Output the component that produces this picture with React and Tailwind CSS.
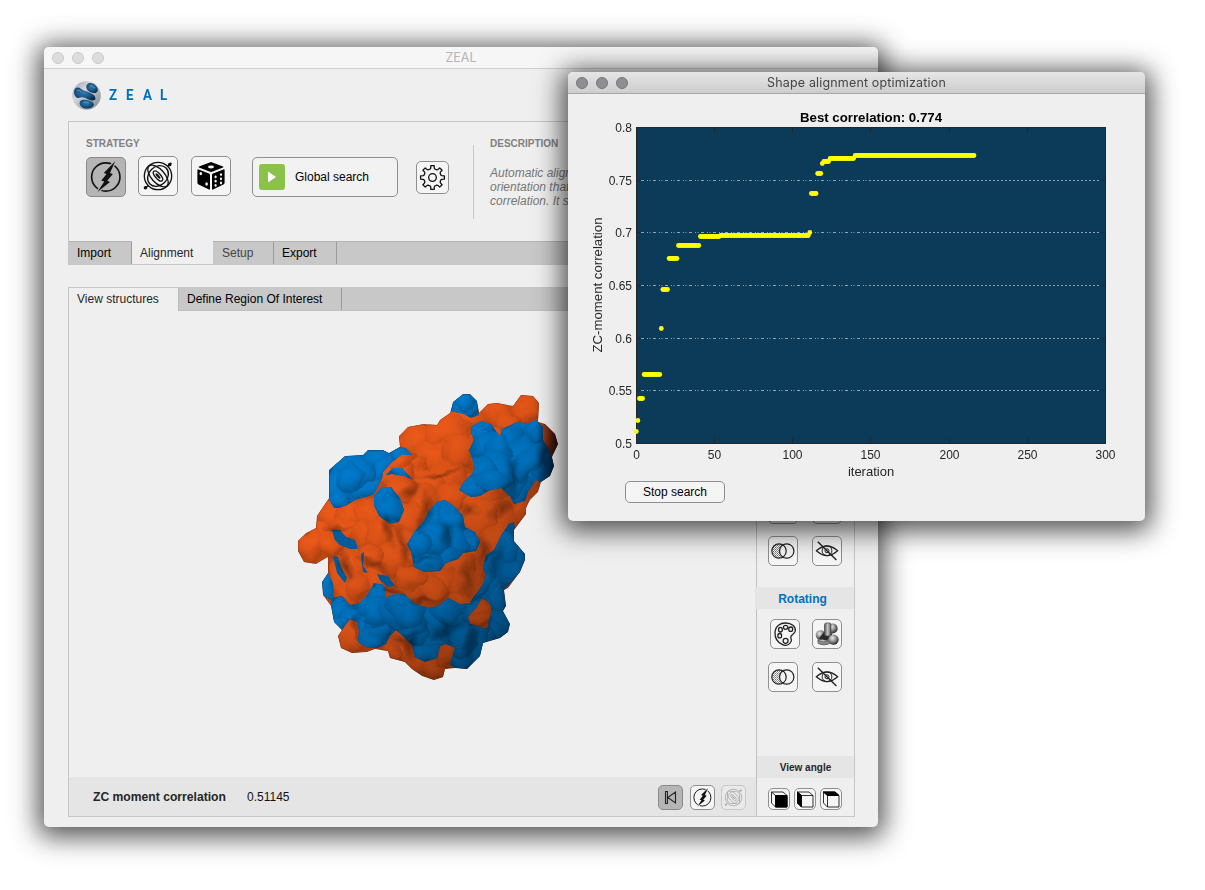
import React from "react";

const FONT = "font-['Liberation_Sans',sans-serif]";

/* ---------- icons ---------- */

const BOLT = "M29.7 3.3 17.6 15.8 20.6 16.8 15 23.8 18.2 24.7 11 35.8 24.2 25.2 21.3 24 27.2 16.8 24.2 15.7Z";

function BoltIcon({ size, bg }) {
  return (
    <svg width={size} height={size} viewBox="0 0 40 40" fill="none">
      <circle cx="19.8" cy="20" r="14.9" stroke="#111" strokeWidth="1.7" />
      <path d={BOLT} fill={bg} stroke={bg} strokeWidth="2.6" />
      <path d={BOLT} fill="#111" />
    </svg>
  );
}

function GyroIcon({ size, color = "#111" }) {
  return (
    <svg width={size} height={size} viewBox="0 0 40 40" fill="none" stroke={color} strokeWidth="1.4">
      <circle cx="20" cy="20" r="14.4" />
      <ellipse cx="20" cy="20" rx="14" ry="7" transform="rotate(48 20 20)" />
      <ellipse cx="20" cy="20" rx="12" ry="9.8" transform="rotate(-45 20 20)" />
      <ellipse cx="20" cy="20" rx="6.6" ry="2.8" transform="rotate(48 20 20)" />
      <ellipse cx="20" cy="20" rx="2.8" ry=".6" transform="rotate(48 20 20)" />
      <path d="M5.8 33.2 10 30M30 10 34 6.2" strokeWidth="1.6" />
      <circle cx="6.8" cy="32.4" r="1.2" fill={color} />
      <circle cx="32.4" cy="8" r="1.2" fill={color} />
    </svg>
  );
}

function DiceIcon() {
  return (
    <svg width="38" height="38" viewBox="0 0 38 38">
      <path d="M19 5 31 9.4Q32 10 31 10.6L20 14.8Q19 15.1 18 14.8L7 10.6Q6 10 7 9.4Z" fill="#000" />
      <path d="M5.4 13.2Q5.4 12 6.6 12.5L17 16.6Q18 17 18 18.2V31.8Q18 33 17 32.5L6.6 27.4Q5.4 27 5.4 25.8Z" fill="#000" />
      <path d="M32.6 13.2Q32.6 12 31.4 12.5L21 16.6Q20 17 20 18.2V31.8Q20 33 21 32.5L31.4 27.4Q32.6 27 32.6 25.8Z" fill="#000" />
      <g fill="#f5f5f5">
        <ellipse cx="19" cy="10" rx="3" ry="1.4" />
        <ellipse cx="8.8" cy="16.6" rx="1.3" ry="1.7" />
        <ellipse cx="14.6" cy="27" rx="1.3" ry="1.8" />
        <ellipse cx="23.6" cy="19.9" rx="1.1" ry="1.4" />
        <ellipse cx="23.6" cy="24.2" rx="1.1" ry="1.4" />
        <ellipse cx="23.6" cy="28.4" rx="1.1" ry="1.4" />
        <ellipse cx="29" cy="17.6" rx="1.1" ry="1.4" />
        <ellipse cx="29" cy="21.8" rx="1.1" ry="1.4" />
        <ellipse cx="29" cy="26" rx="1.1" ry="1.4" />
      </g>
    </svg>
  );
}

function gearPath() {
  const p = [];
  for (let i = 0; i < 8; i++) {
    const a = (i * 45 * Math.PI) / 180;
    [[-0.27, 8.8], [-0.19, 9.5], [-0.14, 12], [0.14, 12], [0.19, 9.5], [0.27, 8.8]].forEach(([d, r]) => {
      p.push(`${(15.5 + r * Math.cos(a + d)).toFixed(2)} ${(15.5 + r * Math.sin(a + d)).toFixed(2)}`);
    });
  }
  return "M" + p.join("L") + "Z";
}

function GearIcon() {
  return (
    <svg width="31" height="31" viewBox="0 0 31 31" fill="none" stroke="#111" strokeWidth="1.3" strokeLinejoin="round">
      <path d={gearPath()} />
      <circle cx="15.5" cy="15.5" r="3.8" />
    </svg>
  );
}

function VennIcon() {
  return (
    <svg width="28" height="28" viewBox="0 0 28 28" fill="none">
      <defs>
        <pattern id="dots" width="2" height="2" patternUnits="userSpaceOnUse">
          <rect width="1" height="1" fill="#777" />
          <rect x="1" y="1" width="1" height="1" fill="#999" />
        </pattern>
      </defs>
      <circle cx="10" cy="14" r="7.2" fill="url(#dots)" />
      <circle cx="17.7" cy="14" r="7.2" fill="#f3f3f3" />
      <circle cx="10" cy="14" r="7.2" stroke="#222" strokeWidth="1.2" />
      <circle cx="17.7" cy="14" r="7.2" stroke="#222" strokeWidth="1.2" />
    </svg>
  );
}

function EyeOffIcon() {
  return (
    <svg width="28" height="28" viewBox="0 0 28 28" fill="none" stroke="#222" strokeWidth="1.3">
      <path d="M3.4 13.8Q14 4.2 24.6 13.8Q14 23.4 3.4 13.8Z" />
      <circle cx="14" cy="13.8" r="4.9" strokeWidth="1" />
      <circle cx="14" cy="13.8" r="2" strokeWidth="1" />
      <path d="M4.8 4.8 23.4 23" strokeWidth="1.4" />
    </svg>
  );
}

function PaletteIcon() {
  return (
    <svg width="28" height="28" viewBox="0 0 28 28" fill="none" stroke="#222" strokeWidth="1.3">
      <path d="M20.2 21.3C18.5 25 15 26.2 11.5 24.6C6.5 22.4 3.8 17.5 4 12.5C4.3 6 9.5 2.8 14.8 3C20.5 3.2 24.8 6.4 24.3 10.8C24 14 20.3 14.2 19.8 16.8C19.4 18.8 21 19.4 20.2 21.3Z" />
      <circle cx="14.6" cy="20.8" r="2.5" />
      <ellipse cx="8.7" cy="15.7" rx="1.9" ry="2.2" />
      <ellipse cx="9.4" cy="9.7" rx="1.9" ry="2.3" />
      <ellipse cx="14.6" cy="7.3" rx="2.2" ry="2" />
      <ellipse cx="19.7" cy="9.2" rx="2" ry="2.2" />
    </svg>
  );
}

function MoleculeIcon() {
  return (
    <svg width="28" height="28" viewBox="0 0 28 28">
      <defs>
        <radialGradient id="ball" cx=".4" cy=".35" r=".65">
          <stop offset="0" stopColor="#ececec" />
          <stop offset=".55" stopColor="#8c8c8c" />
          <stop offset="1" stopColor="#2c2c2c" />
        </radialGradient>
        <linearGradient id="rod">
          <stop offset="0" stopColor="#555" />
          <stop offset=".5" stopColor="#c8c8c8" />
          <stop offset="1" stopColor="#555" />
        </linearGradient>
      </defs>
      <circle cx="19.6" cy="8.4" r="5" fill="url(#ball)" />
      <ellipse cx="11" cy="20.5" rx="6.5" ry="4.6" fill="url(#ball)" />
      <circle cx="7.5" cy="15" r="4.8" fill="url(#ball)" />
      <path d="M6 18.5 11 12H18L20 17 13 20.5Z" fill="#2a2a2a" />
      <rect x="11.5" y="3" width="6.4" height="13" rx="1.8" fill="url(#rod)" stroke="#444" strokeWidth=".7" />
      <path d="M5 20.5Q11 23.5 17 20.5V23.5Q11 26.5 5 23.5Z" fill="#8a8a8a" stroke="#444" strokeWidth=".5" />
      <circle cx="20.5" cy="19.6" r="5.2" fill="url(#ball)" />
    </svg>
  );
}

function RewindIcon() {
  return (
    <svg width="23" height="23" viewBox="0 0 23 23" fill="none" stroke="#222" strokeWidth="1.1">
      <path d="M6.5 5.5H8.4V17.5H6.5ZM16.5 6V17L8.8 11.5Z" />
    </svg>
  );
}

function CubeIcon({ face }) {
  const fills = { front: "M6.5 6.5H18V18H6.5Z", left: "M2.5 3 6.5 6.5V18L2.5 14Z", top: "M2.5 3H14L18 6.5H6.5Z" };
  return (
    <svg width="20" height="20" viewBox="0 0 20 20" fill="none" stroke="#000" strokeWidth="1">
      <path d="M6.5 6.5H18V18H6.5ZM2.5 3H14L18 6.5M2.5 3 6.5 6.5M2.5 3V14L6.5 18" strokeOpacity=".8" />
      <path d={fills[face]} fill="#000" />
    </svg>
  );
}

function Logo() {
  return (
    <svg width="29" height="29" viewBox="0 0 29 29">
      <defs>
        <linearGradient id="lgBg" x1="0" y1="0" x2="1" y2="1">
          <stop offset="0" stopColor="#9aa0a6" />
          <stop offset=".35" stopColor="#d4d7da" />
          <stop offset="1" stopColor="#7b848d" />
        </linearGradient>
        <radialGradient id="lgBlue" cx=".45" cy=".4" r=".65">
          <stop offset="0" stopColor="#3579ad" />
          <stop offset=".55" stopColor="#1a5689" />
          <stop offset="1" stopColor="#0b2a49" />
        </radialGradient>
      </defs>
      <circle cx="14.5" cy="14.5" r="14.3" fill="url(#lgBg)" />
      <path d="M14.6 4.2C16.5 .8 21.5 1.8 24.3 5.2C27 8.8 25.8 12.2 21.8 12C17.2 11.8 13 8 14.6 4.2Z" fill="url(#lgBlue)" />
      <path d="M2.2 9.5C3.2 6 6.6 5.8 9.2 8C12 10.4 18 10.6 21.4 13.8C25 17.2 23.6 20.2 19.6 19.4C16.4 18.8 14 16.8 11.5 16.4C8.6 16 6.6 18 4.4 16.4C2.3 14.9 1.6 12 2.2 9.5Z" fill="url(#lgBlue)" />
      <path d="M8.2 20.2C10 17.6 16.4 18.6 19.8 20.8C24.2 23.6 20.6 27.3 15.8 27.6C10 27.9 6 23.6 8.2 20.2Z" fill="url(#lgBlue)" />
      <path d="M4.6 9.4Q7 8.2 9 10.6M18 4.6Q21 4.6 23 7.2M11.5 21.2Q14.5 20.4 17.2 22.2" stroke="#7fb3d8" strokeWidth="1" fill="none" opacity=".6" />
    </svg>
  );
}

/* ---------- molecular surface ---------- */

const OUTLINE =
  "M329 470 345 456 363 455 368 450 383 450 389 453 400 447 399 436 408 427 424 424 437 425 440 420 450 413 453 402 463 394 470 394 477 401 479 413 488 404 497 403 513 406 521 395 533 396 539 403 538 422 545 424 555 434 558 444 552 457 554 466 550 476 541 482 538 492 530 500 526 508 526 514 514 530 514 541 525 554 525 560 520 572 508 588 504 590 506 606 503 611 510 624 508 632 500 638 483 643 480 656 467 669 455 668 445 669 443 677 434 680 422 676 412 669 405 662 390 658 388 651 375 649 367 652 352 653 341 648 338 636 342 630 334 622 331 606 323 595 322 582 328 573 328 557 316 564 304 562 298 551 298 541 306 533 316 528 317 516 327 501 329 498Z";

const BLUE = [
  "M329 470 345 456 363 455 368 450 383 450 389 453 399 447 406 448 412 455 401 455 391 463 383 472 382 478 378 486 374 494 366 497 357 499 347 505 339 508 334 508 329 499Z",
  "M386 475 393 468 402 468 413 480 404 476 392 474Z",
  "M374 496 382 487 391 487 400 498 404 510 399 522 390 524 379 516 374 505Z",
  "M453 402 463 394 470 394 477 401 479 415 471 418 464 414 451 411Z",
  "M472 426 482 421 492 425 500 437 502 429 517 422 527 424 536 420 543 427 543 440 550 452 554 466 550 476 541 482 536 480 528 492 525 501 514 504 510 496 501 488 490 490 480 496 471 497 459 490 464 482 472 474 475 468 472 458 469 450 474 440 471 432Z",
  "M429 511 437 502 445 500 455 507 463 516 465 527 475 532 480 542 476 551 463 553 458 559 446 563 440 571 424 572 414 567 411 552 407 544 415 531 424 521Z",
  "M508 525 514 522 514 541 525 554 525 560 520 572 504 590 506 606 503 611 510 624 508 632 500 638 483 643 486 636 489 620 492 612 490 603 482 598 476 608 470 602 482 586 486 576 483 567 486 555 494 550 502 534Z",
  "M331 606 332 598 342 596 350 605 360 603 368 594 374 583 384 585 386 598 394 594 404 594 415 604 429 608 438 606 448 598 460 604 474 603 476 608 468 616 470 624 484 628 488 628 484 643 480 656 467 669 455 668 450 665 455 648 446 644 440 646 437 658 425 662 415 657 412 645 403 636 396 630 390 636 386 644 378 648 368 648 358 642 359 630 357 622 350 619 346 624 342 630 334 622Z",
  "M328 573 333 583 334 602 323 595 322 582Z",
  "M332 530 340 530 346 537 355 540 358 549 350 549 340 545 335 540Z",
  "M333 556 338 557 341 567 347 578 345 583 337 573Z",
  "M361 554 364 552 363 566 368 573 363 572Z",
  "M377 574 388 576 395 586 388 587 380 580Z",
  "M508 524 514 522 515 528 510 532Z",
];

/* cx, cy, rx, ry, rotation */
const ORANGE_BLOBS = [
  [480, 440, 40, 30, 0], [430, 520, 50, 40, 0], [380, 560, 40, 30, 0],
  [541, 440, 17, 20, 0], [470, 500, 34, 26, -20], [513, 510, 16, 18, 30], [495, 525, 22, 26, 20], [478, 520, 18, 24, 15],
  [468, 418, 22, 11, 0], [497, 414, 17, 13, 0], [526, 410, 15, 17, 10], [508, 421, 13, 8, 0],
  [418, 441, 22, 18, 0], [450, 432, 24, 16, -10], [434, 458, 27, 17, 20], [458, 451, 18, 20, 0], [412, 466, 15, 14, 0], [446, 478, 22, 16, -10],
  [427, 484, 20, 15, 20], [420, 500, 20, 17, 0], [400, 475, 20, 16, -30], [402, 460, 17, 9, -40],
  [402, 489, 18, 13, -35], [418, 510, 14, 22, 15], [404, 522, 17, 20, 20], [452, 496, 16, 13, 0],
  [334, 516, 18, 16, 20], [352, 515, 18, 17, 0], [372, 516, 18, 16, 0], [346, 530, 16, 13, 20], [366, 534, 18, 14, 0],
  [322, 534, 16, 12, 10], [310, 546, 14, 18, 20], [330, 545, 12, 13, 0],
  [392, 540, 20, 18, 0], [381, 533, 16, 18, 0], [407, 548, 17, 20, -20], [390, 560, 22, 15, 20], [370, 556, 14, 14, 0],
  [352, 570, 15, 22, 10], [340, 578, 10, 20, -10], [348, 592, 14, 13, 0], [375, 580, 15, 16, 0], [358, 587, 12, 13, 0],
  [497, 545, 18, 22, 20], [474, 562, 16, 22, 10], [459, 570, 17, 22, 0], [443, 582, 18, 17, 0], [466, 586, 17, 18, 20], [420, 586, 20, 17, 0], [434, 592, 17, 15, 0], [463, 600, 14, 9, 0], [412, 578, 15, 13, 0],
  [480, 614, 12, 15, 0], [478, 620, 11, 8, 0],
  [352, 638, 15, 17, 10], [361, 628, 10, 13, 0], [398, 642, 17, 15, 0], [406, 652, 18, 11, 20], [392, 653, 12, 8, 0],
  [420, 664, 17, 12, 20], [433, 669, 14, 12, 0], [446, 655, 11, 13, 0],
];

const BLUE_BLOBS = [
  [360, 480, 34, 30, 0], [350, 470, 20, 15, 0], [378, 458, 18, 12, 0], [336, 484, 11, 19, 0], [386, 468, 16, 12, -30], [368, 487, 17, 13, 0], [340, 500, 14, 12, 0], [360, 472, 14, 15, 0], [350, 478, 14, 15, 0],
  [403, 454, 14, 7, -10], [400, 473, 14, 7, 15], [386, 500, 14, 15, 0], [391, 508, 14, 16, -20],
  [465, 409, 16, 8, 0], [465, 402, 12, 10, 0],
  [535, 470, 22, 26, 0], [518, 490, 17, 18, 20], [545, 465, 11, 20, 0], [512, 475, 20, 22, 0], [530, 450, 17, 22, 0],
  [524, 434, 20, 15, 0], [510, 438, 14, 12, -20], [535, 432, 12, 14, 0], [518, 456, 17, 18, 20], [481, 434, 13, 16, 0], [488, 448, 18, 16, 20], [500, 450, 14, 17, 0], [496, 470, 18, 19, 10], [481, 472, 14, 15, 0], [472, 486, 16, 12, -10], [492, 482, 16, 11, 0], [525, 465, 11, 20, 20],
  [445, 515, 20, 18, 0], [433, 522, 15, 17, 20], [452, 520, 14, 20, -10], [470, 541, 13, 13, 0], [455, 545, 14, 16, 0], [445, 556, 16, 13, 0], [428, 562, 17, 12, 0], [434, 540, 15, 17, 0], [420, 543, 14, 15, 0],
  [500, 575, 18, 22, 20], [512, 560, 16, 18, 20], [505, 550, 13, 17, 10], [492, 572, 12, 20, 25], [510, 574, 12, 14, 20], [488, 590, 17, 15, 0], [497, 602, 11, 14, 0], [482, 582, 11, 18, 30],
  [500, 625, 15, 15, 0], [493, 633, 17, 11, 0], [485, 640, 12, 10, 0],
  [328, 588, 7, 18, 0], [340, 610, 14, 13, 0], [352, 617, 16, 12, 20], [340, 624, 11, 9, 0],
  [470, 630, 20, 22, 0], [455, 620, 20, 17, 0], [450, 605, 17, 11, 0], [474, 652, 14, 20, 15], [460, 658, 16, 14, 0], [462, 641, 15, 19, 10], [473, 613, 12, 14, 20],
  [371, 605, 14, 18, 0], [380, 594, 12, 13, 0], [368, 632, 16, 17, 0], [379, 628, 14, 17, 0], [371, 641, 14, 10, 0], [376, 612, 13, 17, 10],
  [434, 620, 17, 16, 0], [430, 642, 17, 17, 0], [426, 652, 14, 11, 0], [415, 632, 13, 15, 0], [408, 623, 20, 15, 0], [394, 611, 14, 18, 0], [405, 607, 20, 15, 15], [410, 613, 18, 15, 0], [446, 612, 14, 12, 0],
];

/* cx, cy, rx, ry, rotation of the shadowed hollows */
const HOLLOWS = [
  [425, 512, 8, 24, 10], [410, 490, 14, 7, -30], [503, 508, 18, 12, -30], [470, 510, 14, 8, 20], [468, 578, 10, 24, 5],
  [440, 634, 16, 8, 0], [495, 562, 8, 26, 20], [452, 625, 18, 9, 0], [374, 564, 24, 6, 25], [402, 545, 7, 22, -10],
  [440, 474, 26, 4, -10], [511, 480, 8, 24, 10], [346, 568, 8, 16, -15], [402, 640, 14, 8, 20], [481, 552, 10, 20, 15],
  [545, 462, 8, 22, 0], [388, 530, 8, 20, 0], [336, 528, 16, 4, 0], [424, 560, 16, 4, 0], [446, 535, 9, 14, 0],
  [356, 625, 6, 16, 0], [412, 645, 8, 16, 0], [424, 600, 26, 4, 5], [392, 590, 14, 4, 10], [472, 640, 8, 24, 10],
];

function Blobs({ items, fill }) {
  return items.map(([x, y, rx, ry, r], i) => (
    <ellipse key={i} cx={x} cy={y} rx={rx} ry={ry} fill={fill} transform={`rotate(${r} ${x} ${y})`} />
  ));
}

function Protein() {
  return (
    <svg width="276" height="300" viewBox="290 386 276 300" className="block">
      <defs>
        <clipPath id="outline"><path d={OUTLINE} /></clipPath>
        <clipPath id="blueArea">{BLUE.map((d, i) => <path key={i} d={d} />)}</clipPath>
        <filter id="organic" x="-5%" y="-5%" width="110%" height="110%" colorInterpolationFilters="sRGB">
          <feTurbulence type="fractalNoise" baseFrequency=".05" numOctaves="2" seed="7" result="n" />
          <feDisplacementMap in="SourceGraphic" in2="n" scale="16" xChannelSelector="R" yChannelSelector="G" />
          <feGaussianBlur stdDeviation=".7" />
        </filter>
        <radialGradient id="og" cx=".42" cy=".36" r=".66">
          <stop offset="0" stopColor="#ec5a1a" />
          <stop offset=".45" stopColor="#e15518" />
          <stop offset=".75" stopColor="#cb4c15" stopOpacity=".9" />
          <stop offset="1" stopColor="#933a10" stopOpacity=".45" />
        </radialGradient>
        <radialGradient id="bg" cx=".42" cy=".36" r=".66">
          <stop offset="0" stopColor="#027ccf" />
          <stop offset=".45" stopColor="#0073c0" />
          <stop offset=".75" stopColor="#0065a9" stopOpacity=".9" />
          <stop offset="1" stopColor="#004473" stopOpacity=".45" />
        </radialGradient>
        <linearGradient id="shade" gradientUnits="userSpaceOnUse" x1="390" y1="470" x2="525" y2="610">
          <stop offset="0" stopColor="#000" stopOpacity="0" />
          <stop offset=".4" stopColor="#000" stopOpacity=".06" />
          <stop offset="1" stopColor="#000" stopOpacity=".36" />
        </linearGradient>
        <radialGradient id="dark">
          <stop offset="0" stopColor="#000" stopOpacity=".34" />
          <stop offset="1" stopColor="#000" stopOpacity="0" />
        </radialGradient>
        <linearGradient id="rim" gradientUnits="userSpaceOnUse" x1="536" y1="0" x2="559" y2="0">
          <stop offset="0" stopColor="#000010" stopOpacity="0" />
          <stop offset="1" stopColor="#000010" stopOpacity=".85" />
        </linearGradient>
      </defs>
      <g clipPath="url(#outline)">
        <path d={OUTLINE} fill="#c04814" />
        <g filter="url(#organic)"><Blobs items={ORANGE_BLOBS} fill="url(#og)" /></g>
        <g clipPath="url(#blueArea)">
          <rect x="290" y="386" width="276" height="300" fill="#005e9c" />
          <g filter="url(#organic)"><Blobs items={BLUE_BLOBS} fill="url(#bg)" /></g>
        </g>
        <rect x="290" y="386" width="276" height="300" fill="url(#shade)" />
        <g filter="url(#organic)"><Blobs items={HOLLOWS} fill="url(#dark)" /></g>
        <rect x="536" y="415" width="24" height="75" fill="url(#rim)" />
        <path d={OUTLINE} fill="none" stroke="#2a1a14" strokeWidth="1" opacity=".4" />
      </g>
    </svg>
  );
}

/* ---------- chart ---------- */

const RUNS = [
  [0, 0, 431.5], [1, 1, 420.5], [2, 4, 398.5], [5, 15, 374.5], [16, 16, 328.5], [17, 20, 289.5],
  [21, 26, 258.5], [27, 40, 245.5], [41, 53, 236.5], [54, 110, 235.5], [111, 111, 232.5], [112, 115, 193.5],
  [116, 118, 173.5], [119, 119, 163.5], [120, 123, 161.5], [124, 139, 158.5], [140, 216, 155.5],
];

function Chart() {
  const dots = [];
  RUNS.forEach(([a, b, y]) => {
    for (let n = a; n <= b; n++) dots.push([636.3 + n * 1.5633, y]);
  });
  const ys = [["0.8", 127.5], ["0.75", 180.5], ["0.7", 232.5], ["0.65", 285.5], ["0.6", 338.5], ["0.55", 390.5], ["0.5", 443.5]];
  const xs = [["0", 636.5], ["50", 714.5], ["100", 792.5], ["150", 870.5], ["200", 949.5], ["250", 1027.5], ["300", 1105.5]];
  return (
    <svg width="577" height="387" viewBox="568 94 577 387" className="block font-['Liberation_Sans',sans-serif]">
      <rect x="636.5" y="127.5" width="469" height="316" fill="#0c3a59" stroke="#262626" />
      {ys.slice(1, -1).map(([l, y]) => (
        <g key={l} fill="none">
          <path d={`M641 ${y}H869`} stroke="#93a5b2" strokeDasharray="3 3 1 1.5 1 2.5" />
          <path d={`M869 ${y}H1101`} stroke="#93a5b2" strokeDasharray="2 2" />
          <path d={`M636 ${y}h5M1106 ${y}h-5`} stroke="#262626" />
        </g>
      ))}
      {xs.slice(1, -1).map(([l, x]) => (
        <path key={l} d={`M${x} 128v5M${x} 443v-5`} stroke="#262626" />
      ))}
      <g fill="#ffff00">
        {dots.map(([x, y], i) => <circle key={i} cx={x} cy={y} r="2.4" />)}
      </g>
      <g fill="#262626" fontSize="12">
        {ys.map(([l, y]) => <text key={l} x="632" y={y + 4.4} textAnchor="end">{l}</text>)}
        {xs.map(([l, x]) => <text key={l} x={x} y="459" textAnchor="middle">{l}</text>)}
      </g>
      <text x="871" y="122" textAnchor="middle" fontSize="13" fontWeight="700" textLength="142" lengthAdjust="spacingAndGlyphs">Best correlation: 0.774</text>
      <text x="871" y="476" textAnchor="middle" fontSize="13" fill="#262626">iteration</text>
      <text transform="translate(602 285) rotate(-90)" textAnchor="middle" fontSize="13" fill="#262626" textLength="135" lengthAdjust="spacingAndGlyphs">ZC-moment correlation</text>
    </svg>
  );
}

/* ---------- widgets ---------- */

const BTN = "flex shrink-0 items-center justify-center border border-[#8f8f8f] bg-[#f5f5f5]";
const SHADOW = "shadow-[0_4px_27px_6px_rgba(0,0,0,0.68)]";

function ToolButton({ children }) {
  return <div className={`${BTN} size-[30px] rounded-[5px]`}>{children}</div>;
}

function Lights({ className }) {
  return (
    <div className="flex gap-2">
      {[0, 1, 2].map((i) => <span key={i} className={`size-3 rounded-full border ${className}`} />)}
    </div>
  );
}

function MainWindow() {
  return (
    <div className={`absolute left-[44px] top-[47px] flex h-[780px] w-[834px] flex-col rounded-[5px] bg-[#efefef] ${SHADOW}`}>
      <div className="relative flex h-[22px] shrink-0 items-center rounded-t-[5px] border-b border-[#cfcfcf] bg-[#f6f6f6] pl-2">
        <Lights className="border-[#cbcbcb] bg-[#dcdcdc]" />
        <div className="absolute inset-x-0 text-center font-['Inter',sans-serif] text-[12.5px] leading-6 text-[#b4b4b4]">ZEAL</div>
      </div>

      <div className="flex h-[52px] shrink-0 items-start pl-7 pt-3">
        <Logo />
        <div className="ml-2 flex pt-[5px] font-['Roboto',sans-serif] text-[15.5px] font-bold leading-[18px] text-[#0072bd]">
          {["Z", "E", "A", "L"].map((c) => <span key={c} className="w-[17px] origin-left scale-x-[.86]">{c}</span>)}
        </div>
      </div>

      <div className="ml-6 flex h-[144px] w-[787px] shrink-0 flex-col border border-[#c6c6c6]">
        <div className="flex h-[119px] items-start pl-[17px]">
          <div className="w-[363px] pt-[15px]">
            <div className="text-[10px] font-bold leading-[13px] text-[#808080]">STRATEGY</div>
            <div className="mt-[7px] flex items-center">
              <div className="flex size-10 items-center justify-center rounded-[5px] border border-[#8a8a8a] bg-[#b5b5b5]">
                <BoltIcon size={40} bg="#b5b5b5" />
              </div>
              <div className={`${BTN} -mt-0.5 ml-3 size-10 rounded-[5px]`}><GyroIcon size={40} /></div>
              <div className={`${BTN} -mt-0.5 ml-[13px] size-10 rounded-[5px]`}><DiceIcon /></div>
              <div className="ml-[21px] flex h-10 w-[146px] items-center rounded-[5px] border border-[#8f8f8f] bg-[#f2f2f2] pl-1.5">
                <div className="flex size-[26px] items-center justify-center rounded-[3px] bg-[#8bc34a]">
                  <svg width="10" height="12" viewBox="0 0 10 12"><path d="M1 .5 9 6 1 11.5Z" fill="#fff" /></svg>
                </div>
                <span className="ml-2.5 text-[12px] text-black">Global search</span>
              </div>
              <div className={`${BTN} ml-[18px] size-[33px] rounded-[5px]`}><GearIcon /></div>
            </div>
          </div>
          <div className="ml-6 mt-[23px] h-[74px] w-px bg-[#c6c6c6]" />
          <div className="ml-4 pt-[15px]">
            <div className="text-[10px] font-bold leading-[13px] text-[#808080]">DESCRIPTION</div>
            <div className="mt-4 whitespace-nowrap text-[12px] italic leading-[14px] text-[#757575]">
              <div>Automatic align</div>
              <div>orientation that</div>
              <div>correlation. It s</div>
            </div>
          </div>
        </div>
        <div className="flex h-[23px] border-t border-[#b4b4b4] bg-[#c8c8c8] text-[12px] leading-[22px] text-black">
          <div className="w-[63px] border-r border-[#9c9c9c] pl-2">Import</div>
          <div className="-mt-px w-[81px] bg-[#efefef] pl-2 pt-px text-[#262626]">Alignment</div>
          <div className="w-[61px] border-r border-[#9c9c9c] pl-[9px] text-[#444]">Setup</div>
          <div className="w-[63px] border-r border-[#9c9c9c] pl-2">Export</div>
        </div>
      </div>

      <div className="ml-6 mt-[22px] flex h-[530px] w-[787px] shrink-0 flex-col border border-[#c6c6c6]">
        <div className="flex h-[23px] shrink-0 border-b border-[#c0c0c0] bg-[#c8c8c8] text-[12px] leading-[22px] text-black">
          <div className="-mb-px w-[110px] border-r border-[#b8b8b8] bg-[#efefef] pl-2 text-[#262626]">View structures</div>
          <div className="w-[163px] border-r border-[#9c9c9c] pl-2">Define Region Of Interest</div>
        </div>
        <div className="flex min-h-0 flex-1">
          <div className="flex w-[687px] flex-col">
            <div className="flex-1 pl-[221px] pt-[75px]"><Protein /></div>
            <div className="flex h-[39px] shrink-0 items-center bg-[#e5e5e5] pl-6">
              <span className="w-[154px] pt-0.5 text-[12.15px] font-bold text-[#262626]">ZC moment correlation</span>
              <span className="text-[12px] text-[#111]">0.51145</span>
              <div className="ml-auto mr-2.5 flex pb-px pt-[2px]">
                <div className="flex size-[25px] items-center justify-center rounded-[5px] border border-[#8a8a8a] bg-[#b5b5b5]"><RewindIcon /></div>
                <div className={`${BTN} ml-[7px] size-[25px] rounded-[5px]`}><BoltIcon size={25} bg="#f5f5f5" /></div>
                <div className="ml-1.5 flex size-[25px] items-center justify-center rounded-[5px] border border-[#c8c8c8] bg-[#eaeaea]"><GyroIcon size={25} color="#a8a8a8" /></div>
              </div>
            </div>
          </div>
          <div className="flex w-[98px] flex-col border-l border-[#c0c0c0] pt-[183px]">
            <div className="flex gap-[14px] pl-[11px]"><ToolButton><PaletteIcon /></ToolButton><ToolButton><MoleculeIcon /></ToolButton></div>
            <div className="mt-3 flex gap-[14px] pl-[11px]"><ToolButton><VennIcon /></ToolButton><ToolButton><EyeOffIcon /></ToolButton></div>
            <div className="-ml-0.5 mt-[21px] h-[22px] bg-[#e5e5e5] pr-1 text-center text-[12px] font-bold leading-6 text-[#0072bd]">Rotating</div>
            <div className="mt-2.5 flex gap-3 pl-[13px]"><ToolButton><PaletteIcon /></ToolButton><ToolButton><MoleculeIcon /></ToolButton></div>
            <div className="mt-[13px] flex gap-[14px] pl-[11px]"><ToolButton><VennIcon /></ToolButton><ToolButton><EyeOffIcon /></ToolButton></div>
            <div className="mt-16 h-[22px] bg-[#e5e5e5] text-center text-[10px] font-bold leading-[23px] text-[#262626]">View angle</div>
            <div className="mt-2.5 flex gap-1 pl-[11px]">
              {["front", "left", "top"].map((f) => (
                <div key={f} className={`${BTN} size-[22px] rounded-[5px]`}><CubeIcon face={f} /></div>
              ))}
            </div>
          </div>
        </div>
      </div>
    </div>
  );
}

function OptimizationWindow() {
  return (
    <div className={`absolute left-[568px] top-[72px] flex h-[449px] w-[577px] flex-col rounded-[5px] bg-[#efefef] ${SHADOW}`}>
      <div className="relative flex h-[22px] shrink-0 items-center rounded-t-[5px] border-b border-[#a6a6a6] bg-linear-to-b from-[#e6e6e6] to-[#cdcdcd] pl-2">
        <Lights className="border-[#77777b] bg-[#8e8e93]" />
        <div className="absolute inset-x-0 text-center font-['Inter',sans-serif] text-[12.5px] leading-6 tracking-[.16px] text-[#454545]">Shape alignment optimization</div>
      </div>
      <Chart />
      <div className="ml-[57px] flex h-[22px] w-[100px] items-center justify-center rounded-[5px] border border-[#8f8f8f] bg-[#f5f5f5] text-[12px] text-black">Stop search</div>
    </div>
  );
}

export default function App() {
  return (
    <div className={`relative h-[890px] w-[1205px] overflow-hidden bg-white ${FONT}`}>
      <MainWindow />
      <OptimizationWindow />
    </div>
  );
}
